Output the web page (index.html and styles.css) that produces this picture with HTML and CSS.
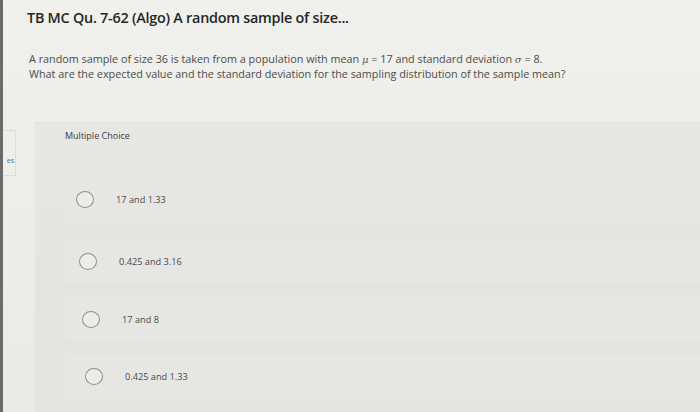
FILE: index.html
```html
<!DOCTYPE html>
<html lang="en">
<head>
<meta charset="utf-8">
<title>TB MC Qu. 7-62</title>
<link rel="stylesheet" href="styles.css">
</head>
<body>
<div class="screen">
  <div class="edge"></div>
  <div class="page">
    <header class="head">
      <h1 class="title">TB MC Qu. 7-62 (Algo) A random sample of size...</h1>
      <p class="question">A random sample of size 36 is taken from a population with mean <i class="sym">μ</i> = 17 and standard deviation <i class="sym">σ</i> = 8.<br>What are the expected value and the standard deviation for the sampling distribution of the sample mean?</p>
    </header>
    <div class="lower">
      <aside class="side">
        <div class="tab">es</div>
      </aside>
      <section class="panel">
        <div class="label">Multiple Choice</div>
        <ul class="options">
          <li class="option o1"><span class="radio"></span><span class="text">17 and 1.33</span></li>
          <li class="option o2"><span class="radio"></span><span class="text">0.425 and 3.16</span></li>
          <li class="option o3"><span class="radio"></span><span class="text">17 and 8</span></li>
          <li class="option o4"><span class="radio"></span><span class="text">0.425 and 1.33</span></li>
        </ul>
      </section>
    </div>
  </div>
</div>
</body>
</html>
```
FILE: styles.css
```css
html, body {
  margin: 0;
  padding: 0;
  height: 100%;
}
body {
  background: #ebebe7;
  font-family: "Open Sans", "Liberation Sans", sans-serif;
  overflow: hidden;
}
.screen {
  display: flex;
  height: 412px;
}
.edge {
  width: 3px;
  background: #6a6a68;
  flex: none;
}
.page {
  flex: 1;
  display: flex;
  flex-direction: column;
  background: linear-gradient(#f0f0ec, #eaeae6);
}
.head {
  padding: 8px 0 0 24px;
  height: 122px;
  box-sizing: border-box;
}
.title {
  margin: 0;
  font-size: 14.4px;
  font-weight: 600;
  color: #262626;
  letter-spacing: -0.25px;
  line-height: 20px;
}
.question {
  margin: 24px 0 0 2px;
  font-size: 10.8px;
  line-height: 14px;
  color: #4c4c4c;
}
.sym {
  font-family: "DejaVu Serif", serif;
  font-size: 10px;
  color: #5a5a66;
}
.lower {
  flex: 1;
  display: flex;
}
.side {
  width: 32px;
  flex: none;
  padding-top: 8px;
}
.tab {
  width: 13px;
  height: 46px;
  border: 1px solid #dcdcd8;
  border-left: none;
  background: #eeeeea;
  font-size: 7px;
  color: #4a6ea8;
  line-height: 8px;
  padding: 26px 1px 0 0;
  box-sizing: border-box;
  text-align: right;
  overflow: hidden;
}
.panel {
  flex: 1;
  background: linear-gradient(#e7e7e3, #e3e3df 60%, #e5e5e0);
  border-top: 1px solid #e1e1dd;
  padding: 7px 0 0 30px;
}
.label {
  font-size: 9px;
  color: #3d3d3d;
  line-height: 12px;
}
.options {
  list-style: none;
  margin: 35px 0 0 0;
  padding: 0;
}
.option {
  display: flex;
  align-items: center;
  height: 44px;
  background: #e6e6e2;
}
.o1 { margin-bottom: 18px; }
.o2 { padding-left: 3px; margin-bottom: 14px; }
.o3 { padding-left: 6px; margin-bottom: 13px; }
.o4 { padding-left: 9px; }
.radio {
  width: 16px;
  height: 15px;
  border: 1.5px solid #8f8f8f;
  border-radius: 50%;
  margin-left: 11px;
  flex: none;
  background: #ececea;
}
.text {
  margin-left: 22px;
  font-size: 9.2px;
  color: #4a4a4a;
}
```
